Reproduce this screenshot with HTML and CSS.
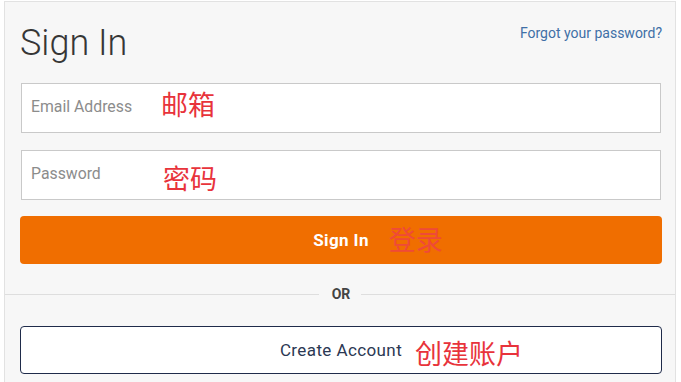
FILE: index.html
```html
<!DOCTYPE html>
<html lang="en">
<head>
<meta charset="utf-8">
<title>Sign In</title>
<link rel="stylesheet" href="styles.css">
</head>
<body>
<div class="panel">
  <div class="head">
    <h1 class="title">Sign In</h1>
    <a class="forgot" href="#">Forgot your password?</a>
  </div>
  <div class="field">
    <input class="input" type="email" placeholder="Email Address">
    <span class="note note-email">邮箱</span>
  </div>
  <div class="field field-pw">
    <input class="input" type="password" placeholder="Password">
    <span class="note note-pw">密码</span>
  </div>
  <button class="btn btn-primary" type="button"><span class="btn-label">Sign In<span class="note note-btn">登录</span></span></button>
  <div class="divider"><span class="line"></span><span class="or">OR</span><span class="line"></span></div>
  <button class="btn btn-outline" type="button"><span class="btn-label">Create Account<span class="note note-create">创建账户</span></span></button>
</div>
</body>
</html>
```

FILE: styles.css
```css
html, body {
  margin: 0;
  padding: 0;
  background: #ffffff;
}
body {
  font-family: Roboto, "Noto Sans", "Noto Sans CJK SC", sans-serif;
  color: #333333;
}
.panel {
  margin: 1px 0 0 4px;
  width: 672px;
  box-sizing: border-box;
  min-height: 381px;
  background: #f7f7f7;
  border: 1px solid #e2e2e2;
  border-bottom: none;
  padding: 19px 13px 0 15px;
}
.head {
  display: flex;
  justify-content: space-between;
  align-items: flex-start;
}
.title {
  margin: 0;
  font-weight: 300;
  font-size: 36px;
  line-height: 44px;
  color: #363636;
}
.forgot {
  margin-top: 4px;
  font-size: 14px;
  line-height: 17px;
  color: #406fa6;
  text-decoration: none;
}
.field {
  position: relative;
  margin-top: 18px;
  padding: 0 1px;
}
.field-pw {
  margin-top: 17px;
}
.input {
  display: block;
  width: 100%;
  height: 50px;
  box-sizing: border-box;
  margin: 0;
  border: 1px solid #c9c9c9;
  border-radius: 0;
  background: #ffffff;
  padding: 12px 9px 16px;
  font-family: Roboto, sans-serif;
  font-size: 15.8px;
  line-height: 20px;
  color: #333333;
  outline: none;
}
.input::placeholder {
  color: #8c8c8c;
  opacity: 1;
}
.note {
  position: absolute;
  font-family: "Noto Sans CJK SC", sans-serif;
  font-size: 27px;
  line-height: 26px;
  font-weight: 400;
  color: #e8333b;
  white-space: nowrap;
  pointer-events: none;
  letter-spacing: 0;
}
.note-email {
  left: 141px;
  top: 8px;
}
.note-pw {
  left: 143px;
  top: 15px;
}
.btn {
  display: flex;
  align-items: center;
  justify-content: center;
  width: 100%;
  height: 48px;
  box-sizing: border-box;
  margin: 16px 0 0;
  border-radius: 4px;
  font-family: Roboto, sans-serif;
  font-size: 17px;
  letter-spacing: 0.4px;
  cursor: pointer;
  padding: 0;
}
.btn-label {
  position: relative;
  line-height: 20px;
}
.btn-primary {
  background: #f06e00;
  border: none;
  color: #ffffff;
  font-weight: 700;
}
.note-btn {
  left: calc(100% + 20px);
  top: 50%;
  margin-top: -14px;
  color: #ef4a38;
}
.divider {
  display: flex;
  align-items: center;
  height: 16px;
  margin: 22px -13px 0 -15px;
}
.line {
  flex: 1;
  height: 1px;
  background: #dedede;
}
.or {
  margin: 0 11px;
  font-size: 14px;
  font-weight: 700;
  line-height: 16px;
  color: #444444;
  padding-left: 2px;
}
.btn-outline {
  margin-top: 24px;
  background: #ffffff;
  border: 1px solid #1f2b4a;
  color: #2b3853;
  font-weight: 400;
}
.note-create {
  left: calc(100% + 13px);
  top: 50%;
  margin-top: -10px;
}
```
